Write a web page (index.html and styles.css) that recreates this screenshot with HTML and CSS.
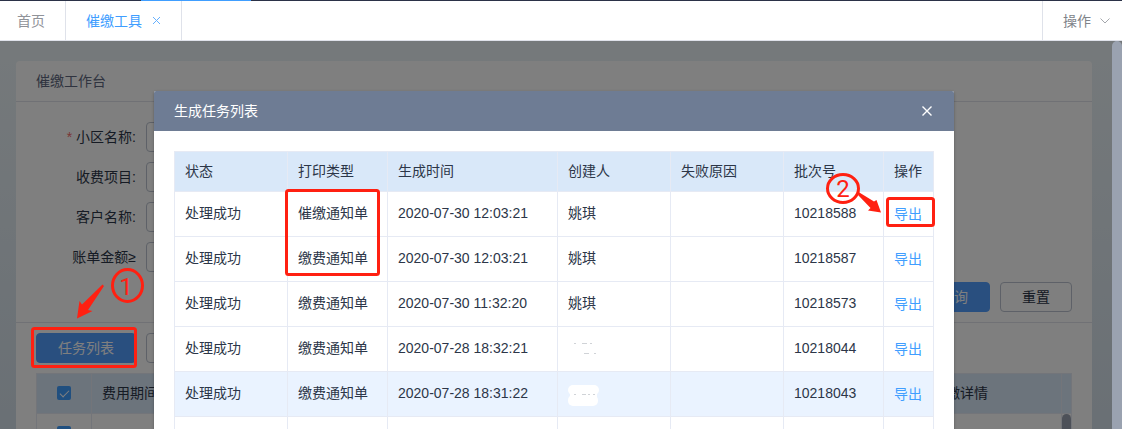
FILE: index.html
```html
<!DOCTYPE html>
<html lang="zh-CN">
<head>
  <meta charset="UTF-8">
  <meta name="viewport" content="width=device-width, initial-scale=1">
  <title>催缴工具</title>
  <link rel="stylesheet" href="styles.css">
</head>
<body>
  <div class="top-line"><span class="top-line-active"></span></div>

  <nav class="tabs">
    <a class="tab tab-home" href="#">首页</a>
    <a class="tab active" href="#">催缴工具
      <svg class="tab-close" viewBox="0 0 9 9"><path d="M1 1 L8 8 M8 1 L1 8"/></svg>
    </a>
    <button class="tab-menu" type="button">操作
      <svg class="chevron" viewBox="0 0 10 6"><path d="M0.5 0.5 L5 5 L9.5 0.5"/></svg>
    </button>
  </nav>

  <main class="main">
    <section class="card">
      <h2 class="card-title">催缴工作台</h2>

      <form class="search-form">
        <div class="form-row">
          <label for="community"><span class="required">*</span> 小区名称:</label>
          <input type="text" id="community">
        </div>
        <div class="form-row">
          <label for="feeItem">收费项目:</label>
          <input type="text" id="feeItem">
        </div>
        <div class="form-row">
          <label for="customer">客户名称:</label>
          <input type="text" id="customer">
        </div>
        <div class="form-row">
          <label for="amount">账单金额≥</label>
          <input type="text" id="amount">
        </div>
        <div class="form-actions">
          <button class="btn btn-primary" type="button">查询</button>
          <button class="btn" type="button">重置</button>
        </div>
      </form>

      <div class="list">
        <div class="toolbar">
          <button class="btn btn-primary btn-task" type="button">任务列表</button>
          <button class="btn btn-task" type="button"></button>
        </div>
        <table class="fee-table">
          <thead>
            <tr>
              <th class="col-check"><input type="checkbox" aria-label="全选" checked></th>
              <th>费用期间</th>
              <th class="col-detail">催缴详情</th>
              <th class="col-gutter"></th>
            </tr>
          </thead>
          <tbody>
            <tr>
              <td class="col-check"><input type="checkbox" aria-label="选择" checked></td>
              <td></td>
              <td></td>
              <td class="col-gutter"><span class="thumb"></span></td>
            </tr>
          </tbody>
        </table>
      </div>
    </section>

    <div class="mask">
      <div class="modal" role="dialog" aria-labelledby="modalTitle">
        <header class="modal-header">
          <h3 id="modalTitle">生成任务列表</h3>
          <button class="modal-close" type="button" aria-label="关闭">
            <svg viewBox="0 0 10 10"><path d="M0.5 0.5 L9.5 9.5 M9.5 0.5 L0.5 9.5"/></svg>
          </button>
        </header>
        <div class="modal-body">
          <table class="task-table">
            <colgroup>
              <col class="w-status"><col class="w-type"><col class="w-time"><col class="w-user"><col class="w-reason"><col class="w-batch"><col class="w-action">
            </colgroup>
            <thead>
              <tr>
                <th>状态</th>
                <th>打印类型</th>
                <th>生成时间</th>
                <th>创建人</th>
                <th>失败原因</th>
                <th>批次号</th>
                <th>操作</th>
              </tr>
            </thead>
            <tbody>
              <tr>
                <td>处理成功</td>
                <td>催缴通知单</td>
                <td>2020-07-30 12:03:21</td>
                <td>姚琪</td>
                <td></td>
                <td>10218588</td>
                <td class="action"><a href="#">导出</a></td>
              </tr>
              <tr>
                <td>处理成功</td>
                <td>缴费通知单</td>
                <td>2020-07-30 12:03:21</td>
                <td>姚琪</td>
                <td></td>
                <td>10218587</td>
                <td class="action"><a href="#">导出</a></td>
              </tr>
              <tr>
                <td>处理成功</td>
                <td>缴费通知单</td>
                <td>2020-07-30 11:32:20</td>
                <td>姚琪</td>
                <td></td>
                <td>10218573</td>
                <td class="action"><a href="#">导出</a></td>
              </tr>
              <tr>
                <td>处理成功</td>
                <td>缴费通知单</td>
                <td>2020-07-28 18:32:21</td>
                <td class="action">
                  <svg class="erased" viewBox="0 0 32 22">
                    <path class="specks" d="M6 5.5h2 M14 5.5h5 M22 5.5h2 M16 15.5h5 M26 15.5h2"/>
                  </svg>
                </td>
                <td></td>
                <td>10218044</td>
                <td class="action"><a href="#">导出</a></td>
              </tr>
              <tr class="hover">
                <td>处理成功</td>
                <td>缴费通知单</td>
                <td>2020-07-28 18:31:22</td>
                <td class="action">
                  <svg class="erased" viewBox="0 0 32 22">
                    <rect x="0" y="2" width="31" height="10" rx="5"/>
                    <rect x="0" y="12" width="30" height="11" rx="5"/>
                    <rect x="2" y="9" width="27" height="6"/>
                    <path class="specks" d="M6 11.5h2 M14 11.5h4 M20 11.5h2 M25 11.5h2"/>
                  </svg>
                </td>
                <td></td>
                <td>10218043</td>
                <td class="action"><a href="#">导出</a></td>
              </tr>
              <tr>
                <td></td>
                <td></td>
                <td></td>
                <td></td>
                <td></td>
                <td></td>
                <td></td>
              </tr>
            </tbody>
          </table>
        </div>

        <!-- step 2: export -->
        <svg class="mark mark-export" viewBox="0 0 800 200">
          <rect x="132.5" y="99.5" width="92" height="84" rx="2"/>
          <rect x="733.5" y="107.5" width="46" height="27" rx="2"/>
          <ellipse cx="689" cy="97.5" rx="15.5" ry="14"/>
          <text x="689" y="106">2</text>
          <path d="M704.5 101 L720 110.5 L722.5 109 L727 121.5 L714 119.5 L716.5 117 L704 104 Z"/>
        </svg>
      </div>
    </div>

    <!-- step 1: task list -->
    <svg class="mark mark-task" viewBox="0 0 160 340">
      <rect x="32.5" y="287.5" width="103" height="38" rx="2"/>
      <ellipse cx="127.5" cy="244.5" rx="15" ry="16"/>
      <text x="126" y="254">1</text>
      <path d="M102.5 243.5 L104 245 L88 269 L92.5 270 L77 277.500 L79.500 260 L82 263.500 Z"/>
    </svg>

    <div class="page-scroll"></div>
  </main>
</body>
</html>
```
FILE: styles.css
```css
* {
  box-sizing: border-box;
}
body {
  margin: 0;
  height: 100vh;
  display: flex;
  flex-direction: column;
  overflow: hidden;
  font-family: "Liberation Sans", "Noto Sans CJK SC", sans-serif;
  font-size: 14px;
  line-height: 20px;
  color: #2c3648;
}
a {
  color: #409eff;
  text-decoration: none;
}
button, input {
  font: inherit;
  color: inherit;
}
svg {
  display: block;
  fill: none;
  stroke: currentColor;
}

/* tabs */
.top-line {
  flex: none;
  height: 1px;
  padding-left: 141px;
  background: #2b3247;
}
.top-line-active {
  display: block;
  width: 110px;
  height: 1px;
  background: #409eff;
}
.tabs {
  flex: none;
  display: flex;
  height: 40px;
  background: #fff;
  border-bottom: 1px solid #dfe2ea;
}
.tab {
  display: flex;
  align-items: center;
  gap: 10px;
  padding: 0 20px;
  border-right: 1px solid #dfe2ea;
  color: #909399;
}
.tab-home {
  padding-left: 17px;
}
.tab.active {
  color: #409eff;
}
.tab-close {
  width: 9px;
  height: 9px;
  opacity: 0.8;
}
.tab-menu {
  display: flex;
  align-items: center;
  gap: 9px;
  margin-left: auto;
  padding: 0 12px 0 20px;
  border: 0;
  border-left: 1px solid #dfe2ea;
  background: none;
  color: #808389;
}
.chevron {
  width: 10px;
  height: 6px;
  color: #a4a7ac;
}

/* page */
.main {
  flex: 1;
  min-height: 0;
  position: relative;
  overflow: hidden;
  padding: 20px 30px 0 16px;
  background: linear-gradient(#ebf3f7, #d4e0ea);
}
.card {
  background: #fff;
  border-radius: 4px;
}
.card-title {
  margin: 0;
  padding: 10px 20px;
  border-bottom: 1px solid #e0e3ea;
  font-size: 14px;
  font-weight: normal;
  color: #606880;
}
.search-form {
  display: flex;
  flex-direction: column;
  gap: 10px;
  padding: 20px 20px 10px;
  border-bottom: 1px solid #e0e3ea;
}
.form-row {
  display: flex;
  align-items: center;
  gap: 10px;
}
.form-row label {
  width: 100px;
  text-align: right;
}
.form-row input {
  width: 200px;
  height: 30px;
  padding: 0 10px;
  border: 1px solid #bcc3d0;
  border-radius: 4px;
  background: #fff;
}
.required {
  color: #f56c6c;
}
.form-actions {
  display: flex;
  justify-content: flex-end;
  gap: 10px;
}
.btn {
  width: 72px;
  height: 30px;
  padding: 0;
  border: 1px solid #bcc3d0;
  border-radius: 4px;
  background: #fff;
}
.btn-primary {
  border-color: #529eff;
  background: #529eff;
  color: #fff;
}
.btn-task {
  width: 100px;
}
.list {
  padding: 10px 20px 0;
}
.toolbar {
  display: flex;
  gap: 10px;
  margin-bottom: 10px;
}

/* tables */
table {
  width: 100%;
  table-layout: fixed;
  border-collapse: separate;
  border-spacing: 0;
  border-top: 1px solid #e6eaf4;
  border-left: 1px solid #e6eaf4;
}
th, td {
  padding: 0 10px 2px;
  border-right: 1px solid #e6eaf4;
  border-bottom: 1px solid #e6eaf4;
  font-weight: normal;
  text-align: left;
}
th {
  height: 40px;
  background: #d9e8f9;
}
td {
  height: 45px;
}
.fee-table td {
  height: 40px;
}
.action {
  padding-bottom: 0;
}
.col-check {
  width: 55px;
  text-align: center;
}
.col-detail {
  width: 140px;
}
.fee-table .col-gutter {
  width: 10px;
  padding: 0;
  vertical-align: top;
}
.thumb {
  display: block;
  height: 39px;
  border-radius: 5px 5px 0 0;
  background: #9aa3b2;
}
input[type="checkbox"] {
  appearance: none;
  display: block;
  width: 14px;
  height: 14px;
  margin: 0 auto;
  border-radius: 2px;
  background: #409eff;
}
input[type="checkbox"]::after {
  content: "";
  display: block;
  width: 4px;
  height: 8px;
  margin: 0 auto;
  border: solid #fff;
  border-width: 0 1px 1px 0;
  transform: translateY(2px) rotate(45deg);
}

/* modal */
.mask {
  position: absolute;
  inset: 0;
  padding: 50px 14px 0 0;
  background: rgba(0, 0, 0, 0.5);
}
.modal {
  position: relative;
  width: 800px;
  margin: 0 auto;
  border-radius: 2px 2px 0 0;
  background: #fff;
  box-shadow: 0 1px 3px rgba(0, 0, 0, 0.3);
}
.modal-header {
  display: flex;
  align-items: center;
  justify-content: space-between;
  height: 40px;
  padding: 0 20px;
  border-radius: 2px 2px 0 0;
  background: #6e7c94;
  color: #fff;
}
.modal-header h3 {
  margin: 0;
  font-size: 14px;
  font-weight: normal;
}
.modal-close {
  width: 14px;
  padding: 2px;
  border: 0;
  background: none;
  stroke-width: 1.4px;
}
.modal-body {
  padding: 20px;
}
.w-status,
.w-user,
.w-reason {
  width: 113px;
}
.w-type,
.w-batch {
  width: 100px;
}
.w-time {
  width: 170px;
}
.w-action {
  width: 50px;
}
.hover td {
  background: #eaf3ff;
}
.erased {
  width: 32px;
  height: 22px;
  overflow: visible;
}
.erased rect {
  fill: #fff;
  stroke: none;
}
.specks {
  stroke: #d0d3d7;
}

/* step marks */
.mark {
  position: absolute;
  left: 0;
  top: 0;
  overflow: visible;
  pointer-events: none;
  stroke: #ff2011;
  stroke-width: 3px;
}
.mark path {
  fill: #ff2011;
  stroke: none;
}
.mark text {
  fill: #ff2011;
  stroke: none;
  font-family: Roboto, sans-serif;
  font-size: 24px;
  text-anchor: middle;
}
.mark-export {
  width: 800px;
  height: 200px;
}
.mark-task {
  width: 160px;
  height: 340px;
}
.page-scroll {
  position: absolute;
  top: 0;
  right: 0;
  bottom: 0;
  width: 10px;
  border-radius: 5px 5px 0 0;
  background: #9aa2b0;
}
```
